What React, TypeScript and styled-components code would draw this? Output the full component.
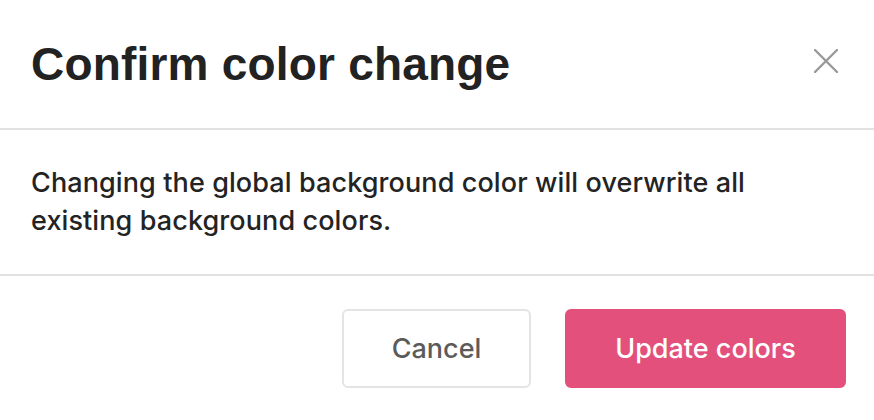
import React from "react";
import styled, { createGlobalStyle } from "styled-components";

const Global = createGlobalStyle`
  html, body { margin: 0; padding: 0; background: #ffffff; }
  body { font-family: Inter, "Liberation Sans", Arial, sans-serif; -webkit-font-smoothing: antialiased; }
  * { box-sizing: border-box; }
`;

const Dialog = styled.div`
  width: 874px;
  height: 420px;
  background: #ffffff;
  display: flex;
  flex-direction: column;
`;

const Header = styled.div`
  height: 130px;
  padding: 0 36px 0 31px;
  display: flex;
  align-items: center;
  justify-content: space-between;
  border-bottom: 2px solid #e2e2e2;
`;

const Title = styled.h1`
  margin: 0;
  font-family: "Liberation Sans", Arial, sans-serif;
  font-weight: 700;
  font-size: 46px;
  letter-spacing: 0.2px;
  color: #222222;
`;

const CloseButton = styled.button`
  border: none;
  background: none;
  padding: 0;
  width: 24px;
  height: 24px;
  display: flex;
  align-items: center;
  justify-content: center;
  cursor: pointer;
  margin-top: -6px;
`;

const Body = styled.div`
  height: 146px;
  padding: 0 31px;
  display: flex;
  align-items: center;
  border-bottom: 2px solid #e2e2e2;
`;

const Message = styled.p`
  margin: 0;
  font-size: 27px;
  line-height: 38px;
  font-weight: 500;
  letter-spacing: 0.1px;
  color: #232323;
`;

const Footer = styled.div`
  flex: 1;
  padding: 0 28px;
  display: flex;
  align-items: center;
  justify-content: flex-end;
  gap: 34px;
`;

const Button = styled.button<{ $primary?: boolean }>`
  height: 79px;
  width: ${(p) => (p.$primary ? "281px" : "189px")};
  border-radius: 6px;
  font-family: Inter, "Liberation Sans", Arial, sans-serif;
  font-size: 27px;
  font-weight: 500;
  border: 2px solid ${(p) => (p.$primary ? "#e3507c" : "#e4e4e4")};
  background: ${(p) => (p.$primary ? "#e3507c" : "#ffffff")};
  color: ${(p) => (p.$primary ? "#ffffff" : "#5b5b5b")};
  cursor: pointer;
`;

export default function App() {
  return (
    <>
      <Global />
      <Dialog>
        <Header>
          <Title>Confirm color change</Title>
          <CloseButton aria-label="Close">
            <svg width="24" height="24" viewBox="0 0 24 24">
              <path d="M1 1 L23 23 M23 1 L1 23" stroke="#999999" strokeWidth="2.4" strokeLinecap="round" fill="none" />
            </svg>
          </CloseButton>
        </Header>
        <Body>
          <Message>
            Changing the global background color will overwrite all existing background colors.
          </Message>
        </Body>
        <Footer>
          <Button>Cancel</Button>
          <Button $primary>Update colors</Button>
        </Footer>
      </Dialog>
    </>
  );
}
